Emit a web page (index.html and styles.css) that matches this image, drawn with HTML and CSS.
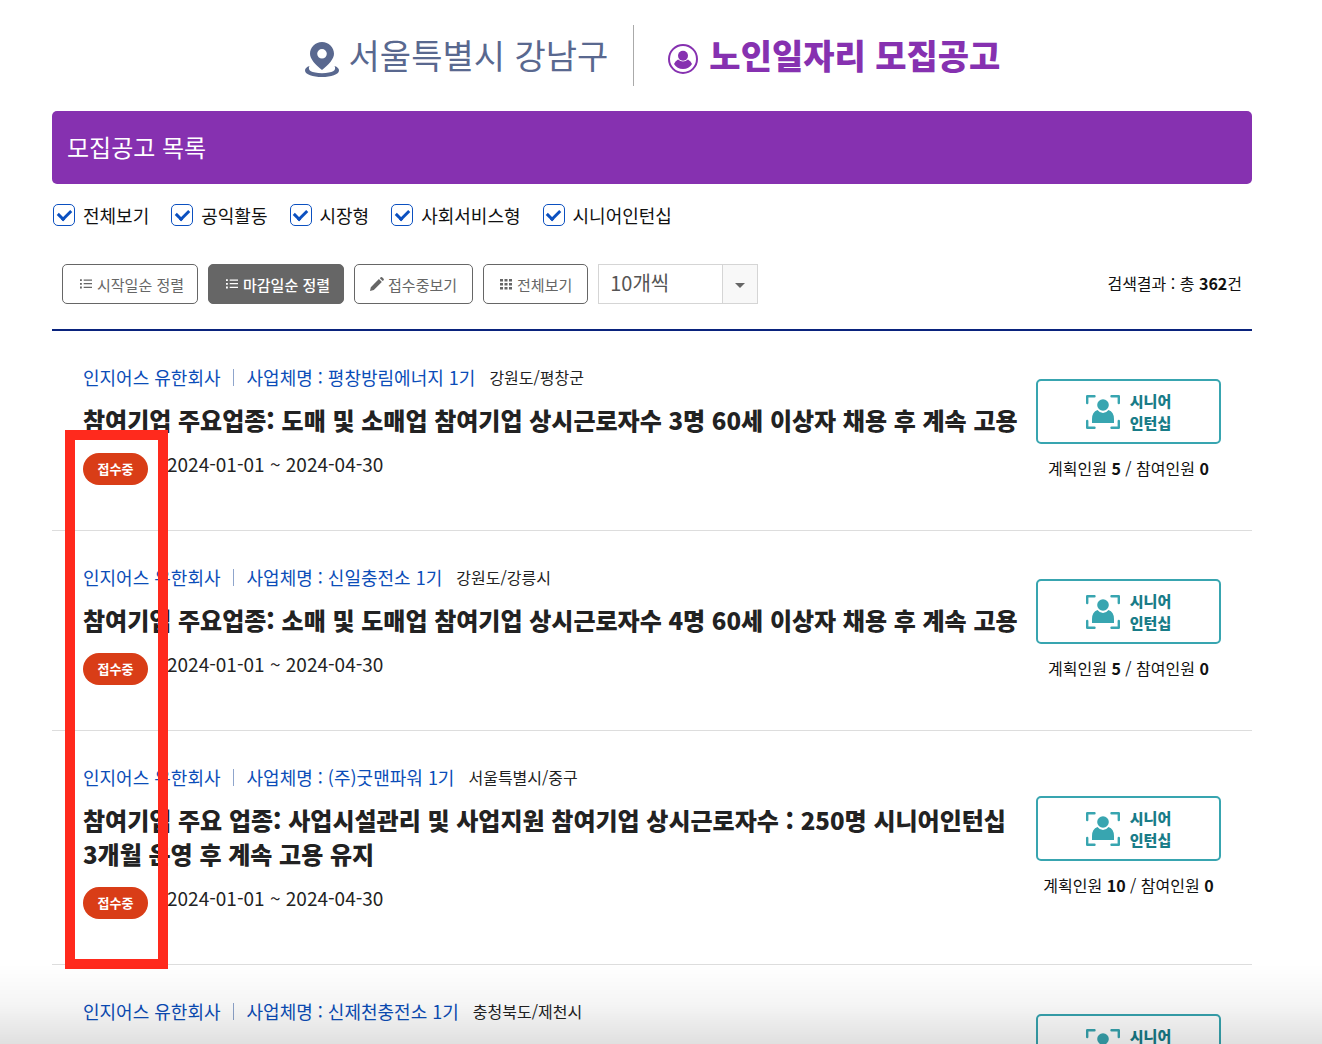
FILE: index.html
```html
<!DOCTYPE html>
<html lang="ko">
<head>
<meta charset="utf-8">
<meta name="viewport" content="width=device-width, initial-scale=1">
<title>노인일자리 모집공고</title>
<link rel="stylesheet" href="styles.css">
</head>
<body>
<svg class="sprite" aria-hidden="true">
  <symbol id="list" viewBox="0 0 13 12"><path d="M0 .8h2v2H0zM0 4.8h2v2H0zM0 8.8h2v2H0zM4 1h9v1.4H4zM4 5h9v1.4H4zM4 9h9v1.4H4z"/></symbol>
  <symbol id="pencil" viewBox="0 0 14 14"><path d="M0 14l.8-3.8L8.9 2.100l2.900 2.900L3.800 13zM9.800 1.200l.9-.9q.7-.6 1.400 0l1.500 1.500q.6.700 0 1.400l-.9.900z"/></symbol>
  <symbol id="grid" viewBox="0 0 14 14"><path d="M1 2h3v2.600H1zM5.500 2h3v2.600h-3zM10 2h3v2.600h-3zM1 6h3v2.600H1zM5.500 6h3v2.600h-3zM10 6h3v2.600h-3zM1 10h3v2.600H1zM5.500 10h3v2.600h-3zM10 10h3v2.600h-3z"/></symbol>
  <symbol id="intern" viewBox="0 0 34 34"><path fill="none" stroke="currentColor" stroke-width="2.400" stroke-linejoin="round" stroke-linecap="round" d="M1.200 8V1.200H8.500M25.500 1.200h7.300V8M1.200 26v6.800H8.500M32.800 26v6.800H25.500"/><circle cx="17" cy="10" r="5.800"/><path d="M6 28v-4q0-7 5.500-9 2.300 3 5.500 3t5.500-3q5.500 2 5.500 9v4z"/></symbol>
</svg>
<div class="page">
  <header class="head">
    <p class="region">
      <svg class="pin" viewBox="0 0 36 36" aria-hidden="true"><path fill-rule="evenodd" d="M18 1c6.700 0 12 5.200 12 11.800C30 18 24.500 24 18 29 11.500 24 6 18 6 12.800 6 6.200 11.300 1 18 1zm0 7a4.800 4.800 0 1 0 0 9.600A4.800 4.800 0 0 0 18 8z"/><path d="M5.500 25Q1 26.500 1 29.500C1 33.500 9 36 18 36s17-2.500 17-6.500q0-3-4.500-4.500 3.500 6.800-12.500 7.200Q2 31.800 5.500 25z"/></svg>
      서울특별시 강남구
    </p>
    <h1 class="title">
      <svg class="person" viewBox="0 0 30 30" aria-hidden="true"><circle cx="15" cy="15" r="14" fill="none" stroke="currentColor" stroke-width="2"/><circle cx="15" cy="11.800" r="5"/><path d="M6 20q1-3 4-4.500 5 4 10 0 3 1.500 4 4.500-3 5-9 5t-9-5z"/></svg>
      노인일자리 모집공고
    </h1>
  </header>
  <main class="board">
    <h2 class="banner">모집공고 목록</h2>
    <div class="filters">
      <label class="check"><input type="checkbox" checked>전체보기</label>
      <label class="check"><input type="checkbox" checked>공익활동</label>
      <label class="check"><input type="checkbox" checked>시장형</label>
      <label class="check"><input type="checkbox" checked>사회서비스형</label>
      <label class="check"><input type="checkbox" checked>시니어인턴십</label>
    </div>
    <div class="tools">
      <button class="btn" type="button"><svg class="icon"><use href="#list"/></svg>시작일순 정렬</button>
      <button class="btn active" type="button"><svg class="icon"><use href="#list"/></svg>마감일순 정렬</button>
      <button class="btn slim" type="button"><svg class="icon"><use href="#pencil"/></svg>접수중보기</button>
      <button class="btn slim" type="button"><svg class="icon"><use href="#grid"/></svg>전체보기</button>
      <div class="picker">
        <select class="count" aria-label="목록 개수"><option>10개씩</option></select>
        <span class="arrow"></span>
      </div>
      <p class="total">검색결과 : 총 <b>362</b>건</p>
    </div>
    <ul class="list">
      <li class="item">
        <div class="info">
          <p class="meta"><a class="org" href="#">인지어스 유한회사</a><a class="biz" href="#">사업체명 : 평창방림에너지 1기</a><span class="place">강원도/평창군</span></p>
          <h3 class="name">참여기업 주요업종: 도매 및 소매업 참여기업 상시근로자수 3명 60세 이상자 채용 후 계속 고용</h3>
          <p class="term"><span class="badge">접수중</span>2024-01-01 ~ 2024-04-30</p>
        </div>
        <div class="side">
          <button class="kind" type="button"><svg class="scan"><use href="#intern"/></svg><span>시니어<br>인턴십</span></button>
          <p class="people">계획인원 <b>5</b> / 참여인원 <b>0</b></p>
        </div>
      </li>
      <li class="item">
        <div class="info">
          <p class="meta"><a class="org" href="#">인지어스 유한회사</a><a class="biz" href="#">사업체명 : 신일충전소 1기</a><span class="place">강원도/강릉시</span></p>
          <h3 class="name">참여기업 주요업종: 소매 및 도매업 참여기업 상시근로자수 4명 60세 이상자 채용 후 계속 고용</h3>
          <p class="term"><span class="badge">접수중</span>2024-01-01 ~ 2024-04-30</p>
        </div>
        <div class="side">
          <button class="kind" type="button"><svg class="scan"><use href="#intern"/></svg><span>시니어<br>인턴십</span></button>
          <p class="people">계획인원 <b>5</b> / 참여인원 <b>0</b></p>
        </div>
      </li>
      <li class="item">
        <div class="info">
          <p class="meta"><a class="org" href="#">인지어스 유한회사</a><a class="biz" href="#">사업체명 : (주)굿맨파워 1기</a><span class="place">서울특별시/중구</span></p>
          <h3 class="name">참여기업 주요 업종: 사업시설관리 및 사업지원 참여기업 상시근로자수 : 250명 시니어인턴십 3개월 운영 후 계속 고용 유지</h3>
          <p class="term"><span class="badge">접수중</span>2024-01-01 ~ 2024-04-30</p>
        </div>
        <div class="side">
          <button class="kind" type="button"><svg class="scan"><use href="#intern"/></svg><span>시니어<br>인턴십</span></button>
          <p class="people">계획인원 <b>10</b> / 참여인원 <b>0</b></p>
        </div>
      </li>
      <li class="item last">
        <div class="info">
          <p class="meta"><a class="org" href="#">인지어스 유한회사</a><a class="biz" href="#">사업체명 : 신제천충전소 1기</a><span class="place">충청북도/제천시</span></p>
        </div>
        <div class="side">
          <button class="kind" type="button"><svg class="scan"><use href="#intern"/></svg><span>시니어</span></button>
        </div>
      </li>
    </ul>
    <div class="marker"></div>
  </main>
</div>
<div class="fade"></div>
</body>
</html>
```
FILE: styles.css
```css
* { box-sizing: border-box; }
body, h1, h2, h3, p, ul { margin: 0; padding: 0; }
body {
  height: 100vh;
  overflow: hidden;
  background: #fff;
  color: #222;
  font-family: "Noto Sans CJK KR", "Noto Sans", sans-serif;
  font-size: 16px;
}
button, select { font-family: inherit; }
a { color: #0b4db8; text-decoration: none; }
b { font-weight: 700; color: #111; }
svg { fill: currentColor; flex: none; }
.sprite { position: absolute; width: 0; height: 0; }
.page { padding: 25px 70px 0 52px; }

.head {
  display: flex;
  justify-content: center;
  height: 61px;
  line-height: 60px;
  margin-bottom: 25px;
}
.region, .title {
  display: flex;
  gap: 9px;
  font-size: 34px;
}
.region {
  padding-right: 25px;
  border-right: 1px solid #aaa;
  color: #59688f;
  font-weight: 400;
}
.title { gap: 11px; padding-left: 34px; color: #8631b0; font-weight: 900; }
.pin { width: 36px; height: 36px; margin-top: 16px; }
.person { width: 30px; height: 30px; margin-top: 19px; }

.board { position: relative; }
.banner {
  padding: 0 15px 2px;
  border-radius: 5px;
  background: #8631b0;
  color: #fff;
  font-size: 24px;
  font-weight: 400;
  line-height: 71px;
}
.filters {
  display: flex;
  gap: 22px;
  padding: 20px 1px 0;
  color: #111;
  font-size: 18px;
  line-height: 22px;
}
.check { display: flex; align-items: center; gap: 8px; }
.check input {
  display: grid;
  place-items: center;
  appearance: none;
  width: 22px;
  height: 22px;
  margin: 0;
  border: 1px solid #0b50c0;
  border-radius: 5px;
}
.check input:checked::after {
  content: "";
  width: 10px;
  height: 6px;
  margin-bottom: 3px;
  border: solid #0b50c0;
  border-width: 0 0 3px 3px;
  transform: rotate(-45deg);
}
.tools {
  display: flex;
  align-items: center;
  gap: 10px;
  padding: 38px 10px 25px;
  border-bottom: 2px solid #0a237d;
}
.btn {
  display: flex;
  align-items: center;
  gap: 5px;
  height: 40px;
  padding: 0 13px 0 17px;
  border: 1px solid #666;
  border-radius: 5px;
  background: #fff;
  color: #666;
  font-size: 15px;
}
.btn.active { background: #666; color: #fff; font-weight: 500; }
.icon { width: 12px; height: 12px; }
.btn.slim { gap: 4px; padding: 0 15px; }
.slim .icon { width: 14px; height: 14px; }
.picker { position: relative; width: 160px; height: 40px; }
.count {
  appearance: none;
  width: 100%;
  height: 100%;
  padding: 0 11px 4px;
  border: 1px solid #d5d5d5;
  border-radius: 0;
  background: #fff;
  color: #555;
  font-size: 20px;
}
.arrow {
  position: absolute;
  top: 1px;
  right: 1px;
  bottom: 1px;
  display: grid;
  place-items: center;
  width: 35px;
  border-left: 1px solid #d5d5d5;
  background: #f8f8f8;
  pointer-events: none;
}
.arrow::after {
  content: "";
  margin-top: 3px;
  border: 5px solid transparent;
  border-top-color: #666;
  border-bottom: 0;
}
.total { margin: 0 0 2px auto; color: #111; }

.list { list-style: none; }
.item {
  display: flex;
  align-items: center;
  min-height: 200px;
  padding: 0 31px;
  border-bottom: 1px solid #ddd;
}
.info { flex: 1; align-self: flex-start; padding: 33px 0 45px; }
.meta { display: flex; align-items: center; font-size: 18px; line-height: 27px; }
.org { display: flex; align-items: center; }
.org::after {
  content: "";
  height: 17px;
  margin: 0 13px 0 12px;
  border-left: 1px solid #8fa5cc;
}
.place { margin-left: 14px; font-size: 16px; }
.name {
  margin: 12px 0 16px;
  font-size: 24px;
  font-weight: 900;
  line-height: 34px;
  word-break: keep-all;
}
.term {
  display: flex;
  gap: 19px;
  font-size: 19px;
  line-height: 22px;
}
.badge {
  width: 65px;
  border-radius: 16px;
  background: #d93d17;
  color: #fff;
  font-size: 13px;
  font-weight: 700;
  line-height: 32px;
  text-align: center;
}
.side { flex: none; width: 185px; padding-bottom: 2px; text-align: center; }
.kind {
  display: flex;
  align-items: center;
  justify-content: center;
  gap: 10px;
  width: 100%;
  height: 65px;
  padding: 0;
  border: 2px solid #38a5b0;
  border-radius: 5px;
  background: transparent;
  color: #197c88;
  font-size: 15px;
  font-weight: 900;
  line-height: 22px;
}
.scan { width: 34px; height: 34px; color: #38a5b0; }
.people { margin-top: 12px; color: #111; line-height: 24px; }
.item.last { align-items: flex-start; border-bottom: 0; }
.last .side { padding-top: 49px; }
.last .kind { align-items: flex-start; padding-top: 13px; line-height: 14px; }

.marker {
  position: absolute;
  top: 319px;
  left: 13px;
  width: 103px;
  height: 539px;
  border: 10px solid #ff2a1d;
}
.fade {
  position: fixed;
  right: 0;
  bottom: 0;
  left: 0;
  height: 80px;
  background: linear-gradient(rgba(0, 0, 0, 0), rgba(0, 0, 0, .04) 50%, rgba(0, 0, 0, .12));
  pointer-events: none;
}
```
